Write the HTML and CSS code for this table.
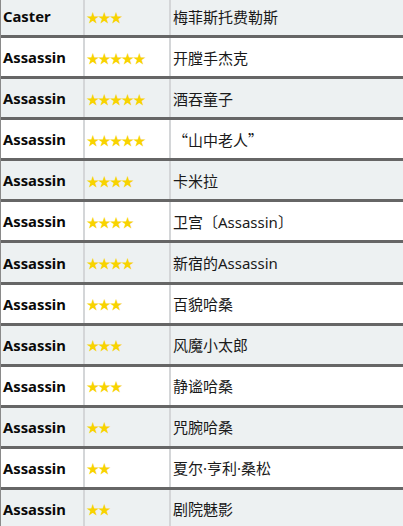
FILE: index.html
```html
<!DOCTYPE html>
<html lang="zh">
<head>
<meta charset="utf-8">
<link rel="stylesheet" href="styles.css">
</head>
<body>
<div class="table">
  <div class="row alt"><div class="cls">Caster</div><div class="stars">★★★</div><div class="name">梅菲斯托费勒斯</div></div>
  <div class="row"><div class="cls">Assassin</div><div class="stars">★★★★★</div><div class="name">开膛手杰克</div></div>
  <div class="row alt"><div class="cls">Assassin</div><div class="stars">★★★★★</div><div class="name">酒吞童子</div></div>
  <div class="row"><div class="cls">Assassin</div><div class="stars">★★★★★</div><div class="name"><span class="cjk">“山中老人”</span></div></div>
  <div class="row alt"><div class="cls">Assassin</div><div class="stars">★★★★</div><div class="name">卡米拉</div></div>
  <div class="row"><div class="cls">Assassin</div><div class="stars">★★★★</div><div class="name">卫宫〔Assassin〕</div></div>
  <div class="row alt"><div class="cls">Assassin</div><div class="stars">★★★★</div><div class="name">新宿的Assassin</div></div>
  <div class="row"><div class="cls">Assassin</div><div class="stars">★★★</div><div class="name">百貌哈桑</div></div>
  <div class="row alt"><div class="cls">Assassin</div><div class="stars">★★★</div><div class="name">风魔小太郎</div></div>
  <div class="row"><div class="cls">Assassin</div><div class="stars">★★★</div><div class="name">静谧哈桑</div></div>
  <div class="row alt"><div class="cls">Assassin</div><div class="stars">★★</div><div class="name">咒腕哈桑</div></div>
  <div class="row"><div class="cls">Assassin</div><div class="stars">★★</div><div class="name">夏尔·亨利·桑松</div></div>
  <div class="row alt"><div class="cls">Assassin</div><div class="stars">★★</div><div class="name">剧院魅影</div></div>
</div>
</body>
</html>
```

FILE: styles.css
```css
html, body {
  margin: 0;
  padding: 0;
  background: #ffffff;
}
.table {
  margin-top: -3px;
  border-left: 1px solid #8a8a8a;
  font-family: "Noto Sans", "Noto Sans CJK SC", sans-serif;
  color: #111111;
}
.row {
  display: grid;
  grid-template-columns: 84px 86px 1fr;
  height: 41.09px;
  box-sizing: border-box;
  border-bottom: 3px solid #666666;
  background: #ffffff;
}
.row.alt {
  background: #edf1f2;
}
.row > div {
  display: flex;
  align-items: center;
  box-sizing: border-box;
  white-space: nowrap;
}
.cls {
  padding-left: 2px;
  font-weight: 700;
  font-size: 14.8px;
  border-right: 2px solid #d4d6d8;
  color: #0a0a0a;
}
.stars {
  padding-left: 1.5px;
  font-family: "Noto Sans CJK SC", sans-serif;
  font-size: 13px;
  letter-spacing: -1.4px;
  color: #f8d300;
  border-right: 2px solid #d4d6d8;
}
.name {
  padding-left: 2px;
  font-family: "Noto Sans", "Noto Sans CJK SC", sans-serif;
  font-size: 15px;
  color: #1a1a1a;
}
.cjk {
  font-family: "Noto Sans CJK SC", sans-serif;
}
```
